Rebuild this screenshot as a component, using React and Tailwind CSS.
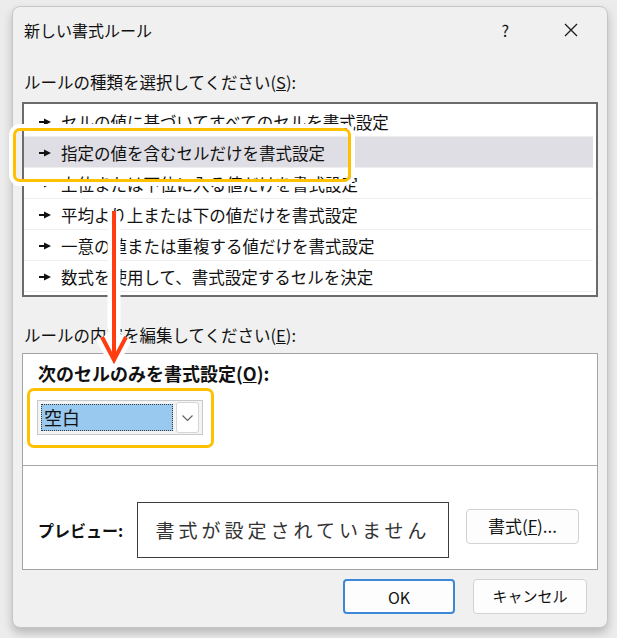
import React from 'react';

const rules = [
  'セルの値に基づいてすべてのセルを書式設定',
  '指定の値を含むセルだけを書式設定',
  '上位または下位に入る値だけを書式設定',
  '平均より上または下の値だけを書式設定',
  '一意の値または重複する値だけを書式設定',
  '数式を使用して、書式設定するセルを決定',
];

function RowArrow() {
  return (
    <svg width="12" height="8" viewBox="0 0 12 8" className="shrink-0">
      <rect x="0" y="3" width="6" height="2" fill="#111" />
      <path d="M5 0.5 L12 4 L5 7.5 Z" fill="#111" />
    </svg>
  );
}

function RedArrow() {
  // annotation arrow drawn over the dialog
  return (
    <svg
      width="40"
      height="175"
      viewBox="0 0 40 175"
      className="absolute left-[83px] top-[189px] pointer-events-none"
    >
      <g stroke="#ffffff" strokeWidth="13" fill="none" strokeLinejoin="miter">
        <line x1="18" y1="15" x2="18" y2="162" />
        <polyline points="6,141 18,164 30,141" />
      </g>
      <g stroke="#ff3d10" strokeWidth="4" fill="none" strokeLinejoin="miter">
        <line x1="18" y1="15" x2="18" y2="162" />
        <polyline points="6,141 18,164 30,141" />
      </g>
    </svg>
  );
}

export default function App() {
  return (
    <div className="min-h-screen bg-[#ececec] pt-[6px] pl-[12px] font-['Noto_Sans_CJK_JP','Noto_Sans',sans-serif] text-[#111]">
      <div className="relative flex h-[622px] w-[596px] flex-col rounded-[8px] border border-[#c6c6c6] bg-[#f0f0f0] shadow-[0_5px_10px_rgba(0,0,0,0.22)]">
        {/* title bar */}
        <div className="flex h-[46px] items-center pl-[11px]">
          <span className="text-[16px]">新しい書式ルール</span>
          <span className="ml-auto mr-[55px] text-[16px]">?</span>
          <svg width="14" height="14" viewBox="0 0 14 14" className="mr-[29px]">
            <path d="M1 1 L13 13 M13 1 L1 13" stroke="#1b1b1b" strokeWidth="1.3" />
          </svg>
        </div>

        <div className="flex flex-col px-[9px]">
          <div className="mt-[17px] h-[24px] pl-[2px] text-[16.5px] leading-[24px]">
            ルールの種類を選択してください(<span className="underline">S</span>):
          </div>

          {/* rule type list */}
          <div className="mt-[8px] h-[195px] border-2 border-[#6b6b6b] bg-white pt-[2px]">
            {rules.map((r, i) => (
              <div
                key={r}
                className={`mr-[3px] flex h-[31px] items-center gap-[10px] border-b border-[#efefef] pl-[15px] pt-[2px] text-[16.5px] ${
                  i === 1 ? 'bg-[#dfdee4]' : ''
                }`}
              >
                <RowArrow />
                <span className="whitespace-nowrap">{r}</span>
              </div>
            ))}
          </div>

          <div className="mt-[26px] h-[24px] pl-[2px] text-[16.5px] leading-[24px]">
            ルールの内容を編集してください(<span className="underline">E</span>):
          </div>

          {/* rule description box */}
          <div className="mt-[6px] flex h-[217px] flex-col border border-[#a3a3a3] bg-white">
            <div className="mt-[7px] h-[24px] pl-[15px] text-[18px] font-bold leading-[24px]">
              次のセルのみを書式設定(<span className="underline">O</span>):
            </div>
            <div className="ml-[14px] mt-[15px] flex h-[35px] w-[166px] items-center border border-[#c9c9c9] bg-[#f4f4f4] p-[3px]">
              <div className="flex h-[27px] w-[136px] items-center border border-dotted border-[#3a3a3a] bg-[#99c9ef] pl-[2px] text-[18px]">
                空白
              </div>
              <div className="ml-[3px] flex h-[31px] w-[24px] items-center justify-center rounded-[3px] border border-[#d6d6d6] bg-white">
                <svg width="11" height="6" viewBox="0 0 11 6">
                  <path d="M0.5 0.5 L5.5 5.5 L10.5 0.5" stroke="#606060" strokeWidth="1.1" fill="none" />
                </svg>
              </div>
            </div>
            <div className="mt-[30px] h-px bg-[#a6a6a6]" />
            <div className="mt-[36px] flex items-center">
              <span className="ml-[15px] w-[99px] text-[16px] font-bold">プレビュー:</span>
              <div className="flex h-[56px] w-[312px] items-center justify-center border border-[#3d3d3d] text-[19px] tracking-[4px] text-[#333]">
                書式が設定されていません
              </div>
              <button className="ml-[17px] mb-[8px] h-[35px] w-[113px] rounded-[4px] border border-[#d2d2d2] bg-[#fdfdfd] text-[17px]">
                書式(<span className="underline">F</span>)...
              </button>
            </div>
          </div>

          {/* dialog buttons */}
          <div className="mt-[9px] flex justify-end gap-[18px] pr-[11px]">
            <button className="h-[35px] w-[112px] rounded-[4px] border-2 border-[#3d88d6] bg-[#fdfdfd] text-[16px]">
              OK
            </button>
            <button className="h-[35px] w-[114px] rounded-[4px] border border-[#d2d2d2] bg-[#fdfdfd] text-[15px]">
              キャンセル
            </button>
          </div>
        </div>

        {/* annotations */}
        <div className="pointer-events-none absolute left-0 top-[121px] h-[54px] w-[338px] rounded-[7px] border-[3px] border-[#ffc000] shadow-[0_0_0_4px_#ffffff]" />
        <div className="pointer-events-none absolute left-[14px] top-[381px] h-[60px] w-[187px] rounded-[7px] border-[3px] border-[#ffc000] shadow-[0_0_0_4px_#ffffff]" />
        <RedArrow />
      </div>
    </div>
  );
}
